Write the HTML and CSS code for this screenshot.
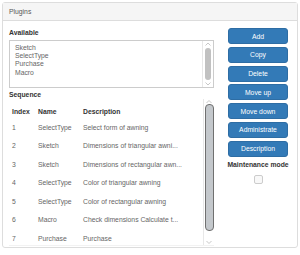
FILE: index.html
```html
<!DOCTYPE html>
<html lang="en">
<head>
    <meta charset="UTF-8">
    <meta name="viewport" content="width=device-width, initial-scale=1.0">
    <link rel="stylesheet" href="styles.css">
</head>
<body>
    <div class="panel">
        <div class="panel-heading">Plugins</div>
        <div class="panel-body">
            <div class="main">
                <div class="label">Available</div>
                <div class="listbox">
                    <div class="list-items">
                        <div class="list-item">Sketch</div>
                        <div class="list-item">SelectType</div>
                        <div class="list-item">Purchase</div>
                        <div class="list-item">Macro</div>
                    </div>
                    <div class="vscroll">
                        <svg class="sb-arrow" width="10" height="6" viewBox="0 0 10 6"><path d="M2.5 4.5L5 2l2.5 2.5" fill="none" stroke="#c8c8c8"/></svg>
                        <div class="sb-track"><div class="sb-thumb list-thumb"></div></div>
                        <svg class="sb-arrow" width="10" height="6" viewBox="0 0 10 6"><path d="M2.5 1.5L5 4l2.5-2.5" fill="none" stroke="#c8c8c8"/></svg>
                    </div>
                </div>

                <div class="label seq-label">Sequence</div>
                <div class="table-wrap">
                    <table class="seq-table">
                        <thead>
                            <tr><th class="col-index">Index</th><th class="col-name">Name</th><th class="col-desc">Description</th><th></th></tr>
                        </thead>
                        <tbody>
                            <tr><td>1</td><td>SelectType</td><td>Select form of awning</td><td></td></tr>
                            <tr><td>2</td><td>Sketch</td><td>Dimensions of triangular awni...</td><td></td></tr>
                            <tr><td>3</td><td>Sketch</td><td>Dimensions of rectangular awn...</td><td></td></tr>
                            <tr><td>4</td><td>SelectType</td><td>Color of triangular awning</td><td></td></tr>
                            <tr><td>5</td><td>SelectType</td><td>Color of rectangular awning</td><td></td></tr>
                            <tr><td>6</td><td>Macro</td><td>Check dimensions Calculate t...</td><td></td></tr>
                            <tr><td>7</td><td>Purchase</td><td>Purchase</td><td></td></tr>
                        </tbody>
                    </table>
                    <div class="vscroll">
                        <svg class="sb-arrow" width="10" height="5" viewBox="0 0 10 5"><path d="M2.5 4L5 1.5 7.5 4" fill="none" stroke="#c8c8c8"/></svg>
                        <div class="sb-track"><div class="sb-thumb table-thumb"></div></div>
                        <svg class="sb-arrow" width="10" height="5" viewBox="0 0 10 5"><path d="M2.5 1L5 3.5 7.5 1" fill="none" stroke="#c8c8c8"/></svg>
                    </div>
                </div>
            </div>

            <div class="side">
                <button class="btn">Add</button>
                <button class="btn">Copy</button>
                <button class="btn">Delete</button>
                <button class="btn">Move up</button>
                <button class="btn">Move down</button>
                <button class="btn">Administrate</button>
                <button class="btn">Description</button>
                <div class="label mode-label">Maintenance mode</div>
                <input type="checkbox" class="check">
            </div>
        </div>
    </div>
</body>
</html>
```

FILE: styles.css
```css
body {
    margin: 2px;
    font-family: "Liberation Sans", Arial, sans-serif;
    font-size: 6.8px;
    color: #666;
    background-color: #fff;
}

.panel {
    border: 1px solid #ddd;
    border-radius: 3px;
    height: 246px;
    box-sizing: border-box;
}

.panel-heading {
    background-color: #f5f5f5;
    border-bottom: 1px solid #ddd;
    height: 17px;
    line-height: 17px;
    padding: 0 6px;
    color: #555;
}

.panel-body {
    display: grid;
    grid-template-columns: 205px 60px;
    column-gap: 14px;
    padding: 7px 6px 0 6px;
}

.label {
    font-weight: bold;
    color: #333;
    line-height: 9px;
    white-space: nowrap;
}

/* Available list */
.listbox {
    display: flex;
    margin-top: 3px;
    height: 48px;
    box-sizing: border-box;
    border: 1px solid #ccc;
}

.list-items {
    flex: 1;
    padding: 3px 5px;
}

.list-item {
    line-height: 8.2px;
    color: #666;
}

/* scrollbars */
.vscroll {
    width: 10px;
    display: flex;
    flex-direction: column;
    border-left: 1px solid #e8e8e8;
    background-color: #fff;
}

.sb-arrow {
    display: block;
    flex: none;
}

.sb-track {
    flex: 1;
    display: flex;
    flex-direction: column;
    align-items: center;
}

.sb-thumb {
    box-sizing: border-box;
}

.list-thumb {
    width: 6px;
    height: 32px;
    margin-top: 1px;
    background-color: #c1c1c1;
    border-radius: 3px;
}

.table-thumb {
    width: 9px;
    height: 127px;
    background-color: #c4c8cc;
    border: 1.5px solid #707070;
    border-radius: 4px;
}

/* Sequence table */
.seq-label {
    margin-top: 2px;
}

.table-wrap {
    display: flex;
    height: 146px;
    overflow: hidden;
    border-bottom: 1px solid #f2f2f2;
}

.seq-table {
    flex: 1;
    border-collapse: collapse;
    table-layout: fixed;
    align-self: flex-start;
}

.seq-table th {
    height: 17px;
    vertical-align: bottom;
    padding: 0 0 2px 3px;
    text-align: left;
    font-weight: bold;
    color: #333;
    line-height: 9px;
}

.col-index {
    width: 23px;
}

.col-name {
    width: 42px;
}

.col-desc {
    width: 100px;
}

.seq-table td {
    height: 18.5px;
    padding: 0 0 0 3px;
    line-height: 9px;
    color: #666;
    white-space: nowrap;
}

/* Buttons on the right */
.side {
    display: flex;
    flex-direction: column;
    align-items: center;
    gap: 2.8px;
}

.btn {
    width: 60px;
    height: 16px;
    padding: 0;
    background-color: #337ab7;
    border: 1px solid #2e6da4;
    border-radius: 3px;
    color: #fff;
    font-family: "Liberation Sans", Arial, sans-serif;
    font-size: 6.8px;
}

.mode-label {
    margin-top: 0.5px;
}

.check {
    appearance: none;
    -webkit-appearance: none;
    width: 9px;
    height: 9px;
    margin: 3px 0 0 0;
    border: 1px solid #ccc;
    border-radius: 2px;
    background-color: #f8f8f8;
}
```
